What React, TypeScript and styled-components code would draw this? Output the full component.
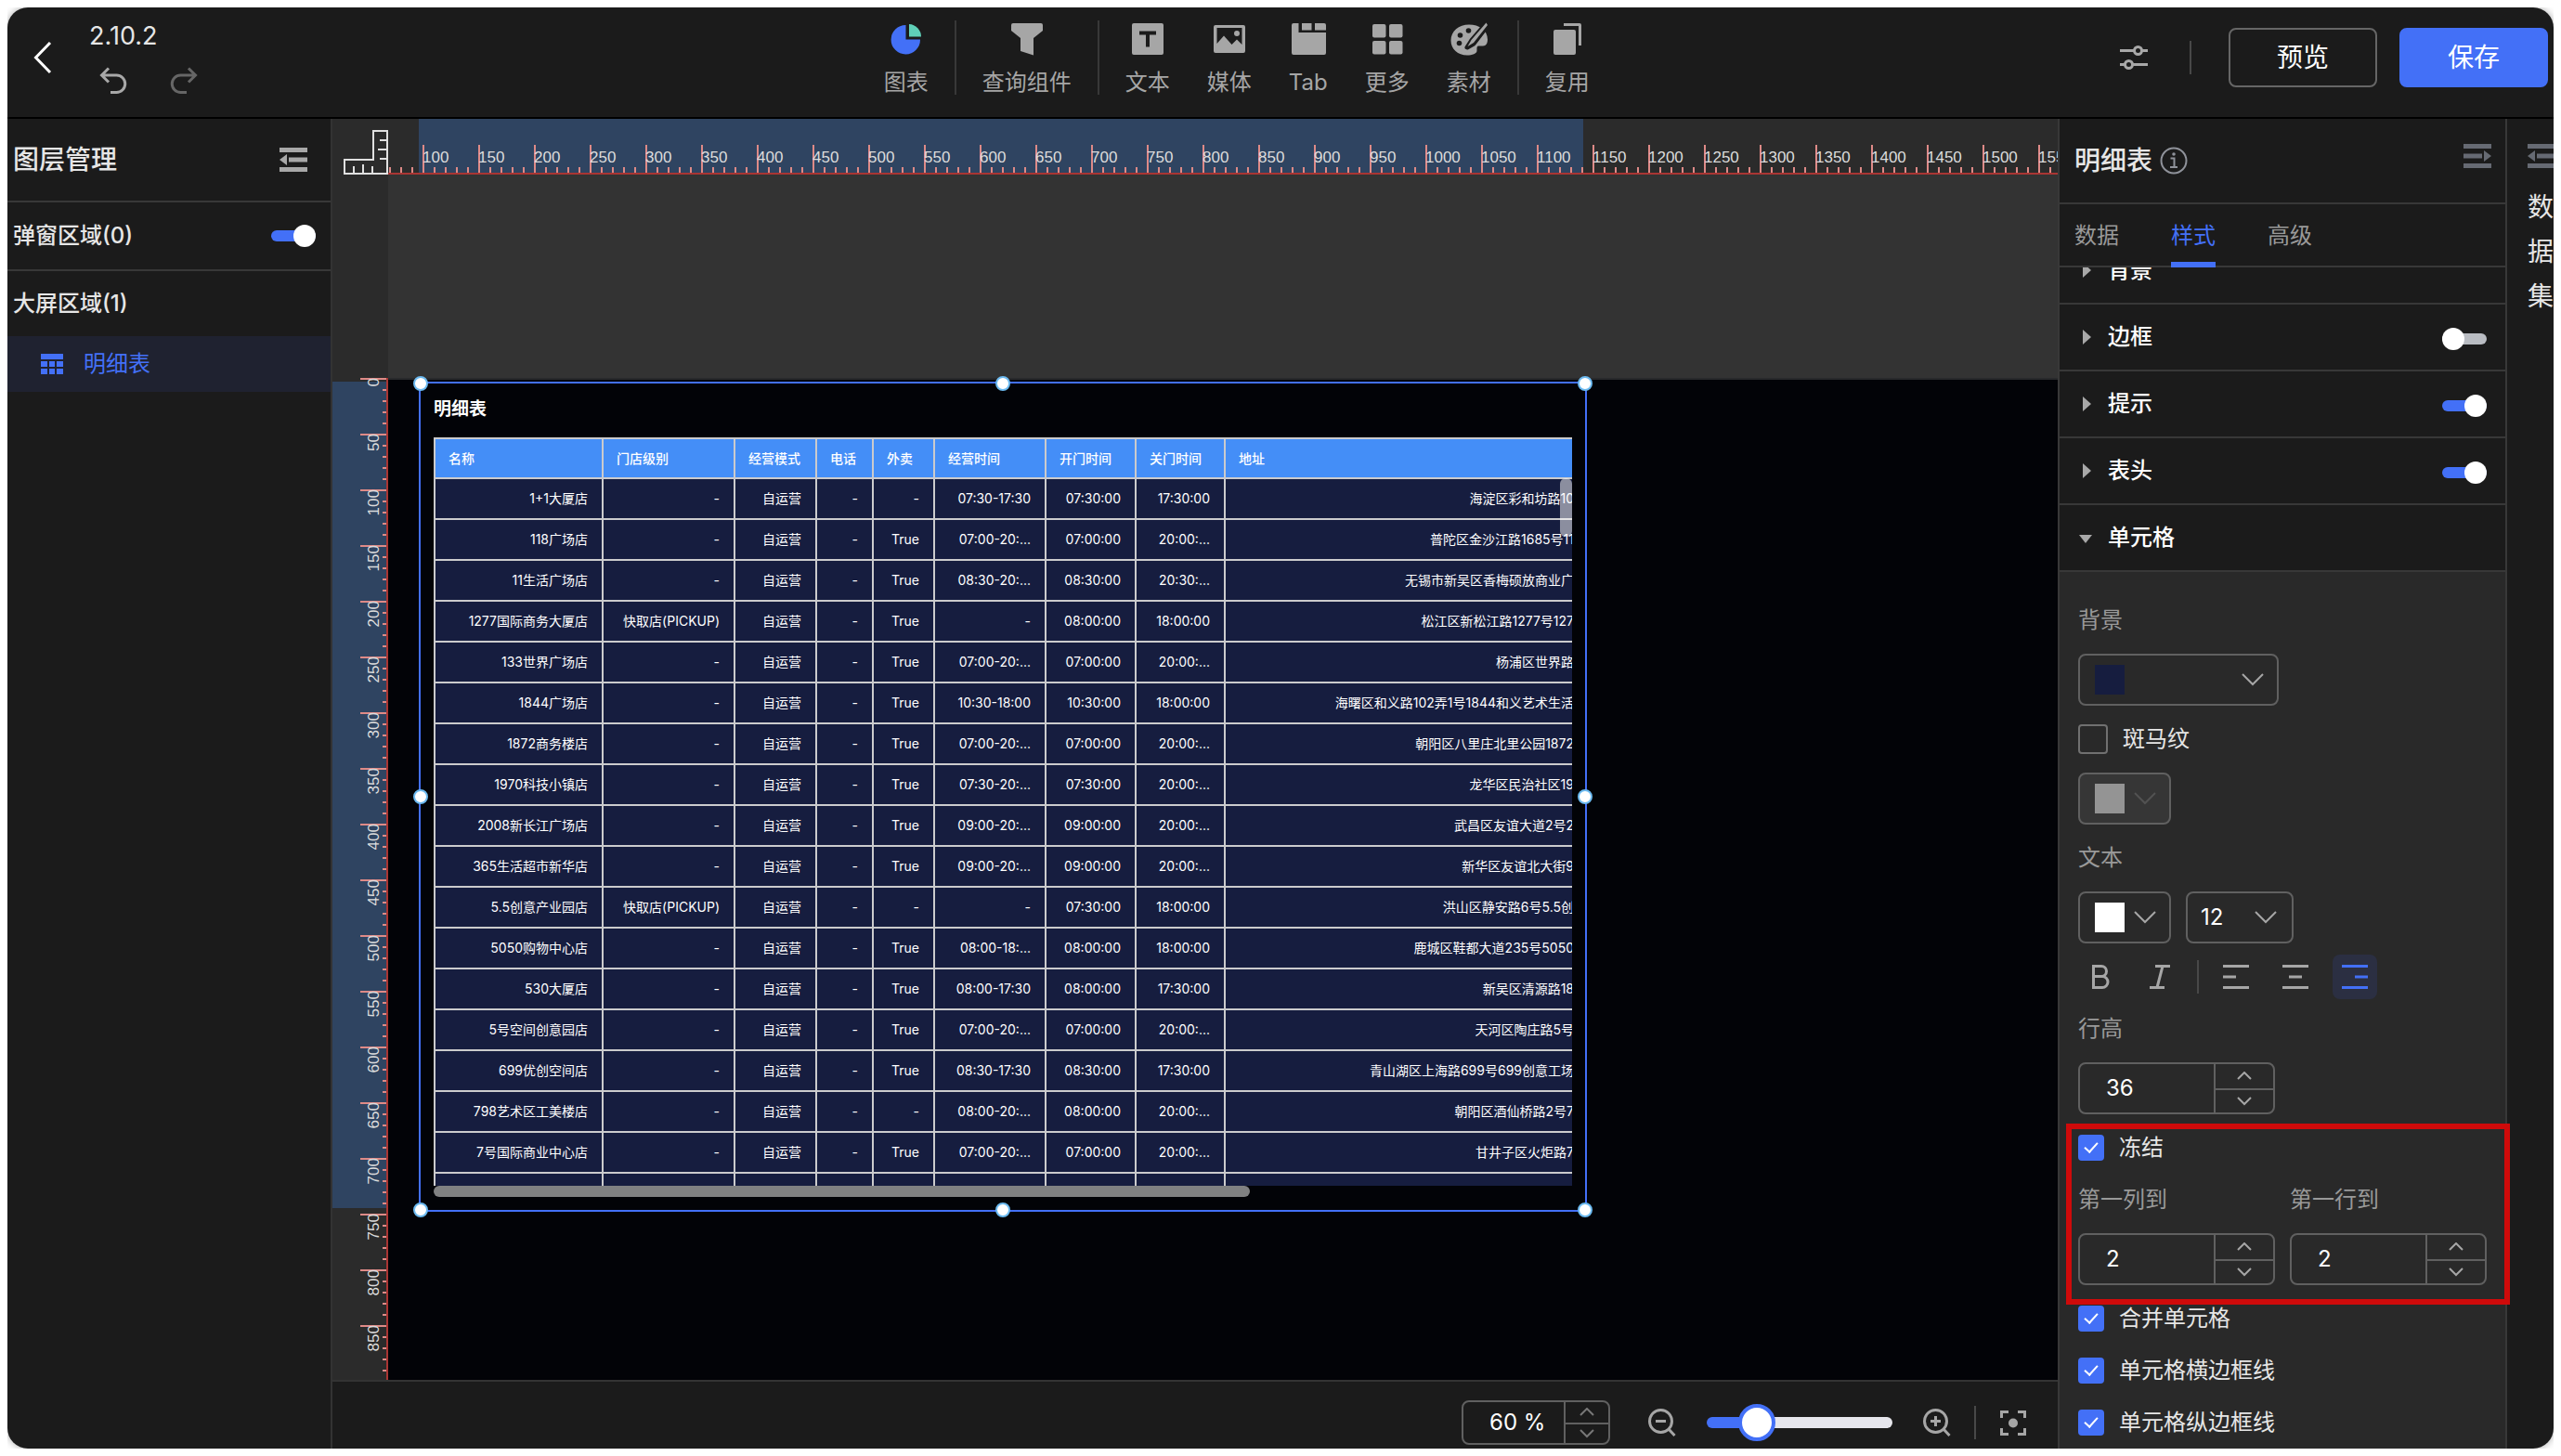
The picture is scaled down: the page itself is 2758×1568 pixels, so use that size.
import React, { useState } from "react";
import styled, { createGlobalStyle, css } from "styled-components";

const c = {
  bg: "#1b1b1b",
  panel: "#292929",
  line: "#383838",
  border: "#606060",
  primary: "#4370f7",
  text: "#e6e6e6",
  muted: "#a6a6a6",
  dim: "#999999",
  rulerBg: "#2b2b2b",
  rulerActive: "#2f4461",
  tick: "#de8a87",
  rulerLine: "#a93533",
  cell: "#161d3f",
  head: "#448ef7",
  grid: "#cbcbcd",
};

const sans = `Inter, "Noto Sans CJK SC", sans-serif`;

const GlobalStyle = createGlobalStyle`
  *, *::before, *::after { box-sizing: border-box; }
  body { margin: 8px; background: #fff; font-family: ${sans}; line-height: 32px; color: ${c.text}; }
  button, input, select { font: inherit; color: inherit; margin: 0; }
  button { padding: 0; border: 0; background: none; cursor: pointer; }
  svg { display: block; flex: none; }
`;

const Window = styled.div`
  display: flex;
  flex-direction: column;
  height: calc(100vh - 16px);
  border-radius: 22px;
  overflow: hidden;
  background: ${c.bg};
  box-shadow: 0 0 8px rgba(0, 0, 0, 0.35);
  font-size: 24px;
`;

/* ---------- header ---------- */

const Header = styled.header`
  display: grid;
  grid-template-columns: 1fr auto 1.1fr;
  height: 120px;
  flex: none;
  border-bottom: 2px solid #000;
`;

const HeaderLeft = styled.div`
  display: flex;
  align-items: flex-start;
`;

const BackButton = styled.button`
  padding: 36px 40px 0 28px;
`;

const ProjectInfo = styled.div`
  display: flex;
  flex-direction: column;
  gap: 16px;
  padding-top: 14px;
`;

const ProjectName = styled.span`
  font-size: 27px;
  line-height: 34px;
`;

const HistoryButtons = styled.div`
  display: flex;
  gap: 44px;
  padding-left: 10px;
`;

const Tools = styled.nav`
  display: flex;
  align-items: flex-start;
  gap: 40px;
  padding-top: 16px;
`;

const ToolGroup = styled.div`
  display: flex;
  gap: 40px;
  & + & {
    position: relative;
    margin-left: 18px;
  }
  & + &::before {
    content: "";
    position: absolute;
    left: -30px;
    top: -2px;
    width: 2px;
    height: 80px;
    background: ${c.line};
  }
`;

const ToolButton = styled.button`
  display: flex;
  flex-direction: column;
  align-items: center;
  gap: 13px;
  line-height: 32px;
  color: ${c.muted};
`;

const HeaderRight = styled.div`
  display: flex;
  justify-content: flex-end;
  align-items: flex-start;
  padding: 22px 6px 0 0;
`;

const SettingsButton = styled.button`
  height: 64px;
`;

const VDivider = styled.span<{ $m: number }>`
  width: 2px;
  height: 36px;
  align-self: center;
  margin: 0 ${(p) => p.$m}px;
  background: #484848;
`;

const HeaderDivider = styled(VDivider)`
  align-self: flex-start;
  margin: 14px 40px 0 44px;
`;

const ActionButton = styled.button<{ $primary?: boolean }>`
  width: 160px;
  height: 64px;
  border-radius: 8px;
  border: 2px solid ${(p) => (p.$primary ? c.primary : "#666")};
  background: ${(p) => (p.$primary ? c.primary : "transparent")};
  color: #fff;
  font-size: 28px;
  & + & {
    margin-left: 24px;
  }
`;

/* ---------- frame ---------- */

const Main = styled.div`
  display: grid;
  grid-template-columns: 350px minmax(0, 1fr) 484px 50px;
  flex: 1;
  min-height: 0;
`;

const LayersPanel = styled.aside`
  border-right: 2px solid #333;
`;

const PanelHeader = styled.div`
  display: flex;
  align-items: center;
  justify-content: space-between;
  height: 90px;
  padding: 0 25px 0 6px;
  border-bottom: 2px solid ${c.line};
`;

const PanelTitle = styled.h2`
  margin: 0;
  font-size: 28px;
  font-weight: 500;
`;

const AreaRow = styled.label<{ $line?: boolean }>`
  display: flex;
  align-items: center;
  justify-content: space-between;
  height: ${(p) => (p.$line ? 74 : 70)}px;
  padding: 0 16px 0 6px;
  border-bottom: ${(p) => (p.$line ? `2px solid ${c.line}` : "0")};
  font-weight: 500;
`;

const LayerItem = styled.button`
  display: flex;
  align-items: center;
  gap: 22px;
  width: 100%;
  height: 60px;
  padding-left: 36px;
  background: #1f2230;
  color: ${c.primary};
`;

const Switch = styled.input.attrs({ type: "checkbox", role: "switch" })`
  appearance: none;
  position: relative;
  width: 48px;
  height: 12px;
  border-radius: 6px;
  background: #b9bcc2;
  &::after {
    content: "";
    position: absolute;
    top: -6px;
    left: 0;
    width: 24px;
    height: 24px;
    border-radius: 50%;
    background: #fff;
  }
  &:checked {
    background: ${c.primary};
  }
  &:checked::after {
    left: 24px;
  }
`;

/* ---------- canvas ---------- */

const Editor = styled.main`
  display: grid;
  grid-template-columns: 60px minmax(0, 1fr);
  grid-template-rows: 60px minmax(0, 1fr) 74px;
  min-height: 0;
`;

const RulerCorner = styled.div`
  display: flex;
  align-items: flex-end;
  justify-content: flex-end;
  background: ${c.rulerBg};
`;

const rulerText = css`
  font-family: "Liberation Sans", sans-serif;
  font-size: 17px;
  line-height: 20px;
  color: #dcdcdc;
`;

const TopRuler = styled.div`
  position: relative;
  overflow: hidden;
  background: ${c.rulerBg};
  border-bottom: 2px solid ${c.rulerLine};
`;

const TopRange = styled.span`
  position: absolute;
  left: 33px;
  top: 0;
  width: 1254px;
  height: 100%;
  background: ${c.rulerActive};
`;

const TopTrack = styled.div`
  position: relative;
  display: flex;
  align-items: flex-end;
  width: max-content;
  height: 58px;
  margin-left: -23px;
  background: repeating-linear-gradient(to right, ${c.tick} 0 2px, transparent 2px 12px) bottom / 100% 6px no-repeat;
`;

const TopMark = styled.span`
  width: 60px;
  height: 30px;
  padding-top: 4px;
  background: linear-gradient(${c.tick}, ${c.tick}) left / 2px 100% no-repeat;
  ${rulerText}
`;

const LeftRuler = styled.div`
  position: relative;
  overflow: hidden;
  padding-top: 219px;
  background: ${c.rulerBg};
`;

const LeftRange = styled.span`
  position: absolute;
  left: 0;
  top: 223px;
  width: 100%;
  height: 890px;
  background: ${c.rulerActive};
`;

const LeftTrack = styled.div`
  position: relative;
  display: flex;
  flex-direction: column;
  align-items: flex-end;
  border-right: 2px solid ${c.rulerLine};
  background: repeating-linear-gradient(to bottom, ${c.tick} 0 2px, transparent 2px 12px) right / 4px 100% no-repeat;
`;

const LeftMark = styled.span`
  display: flex;
  justify-content: flex-end;
  align-items: flex-start;
  width: 28px;
  height: 60px;
  padding-right: 3px;
  background: linear-gradient(${c.tick}, ${c.tick}) top / 100% 2px no-repeat;
  ${rulerText}
`;

const Upright = styled.span`
  writing-mode: vertical-rl;
  transform: rotate(180deg);
`;

const Viewport = styled.div`
  display: flex;
  flex-direction: column;
  overflow: hidden;
  padding-top: 219px;
  background: #333;
`;

const Stage = styled.div`
  position: relative;
  flex: 1;
  border-top: 2px solid #28292b;
  background: #020307;
`;

const Widget = styled.section`
  position: absolute;
  left: 33px;
  top: 2px;
  width: 1258px;
  height: 894px;
  padding: 0 14px;
  border: 2px solid ${c.primary};
`;

const Handle = styled.span<{ $x: number; $y: number }>`
  position: absolute;
  left: ${(p) => p.$x}%;
  top: ${(p) => p.$y}%;
  width: 16px;
  height: 16px;
  margin: -8px 0 0 -8px;
  border: 2px solid #6cbaf0;
  border-radius: 50%;
  background: #fff;
`;

const WidgetTitle = styled.h3`
  margin: 0;
  height: 58px;
  font-size: 19px;
  line-height: 56px;
  font-weight: 700;
  color: #fff;
`;

const TableView = styled.div`
  position: relative;
  height: 806px;
  width: 1226px;
  overflow: hidden;
`;

const Table = styled.table`
  table-layout: fixed;
  width: 1226px;
  border-collapse: separate;
  border-spacing: 0;
  border-left: 2px solid ${c.grid};
  font-size: 14px;
  line-height: 20px;
  color: #fff;
`;

const Th = styled.th`
  height: 45px;
  padding: 0 14px;
  border: solid ${c.grid};
  border-width: 2px 2px 2px 0;
  background: ${c.head};
  text-align: left;
  font-weight: 500;
  white-space: nowrap;
  &:last-child {
    border-right: 0;
  }
`;

const Td = styled.td`
  height: 44px;
  padding: 0 15px 0 13px;
  border: solid ${c.grid};
  border-width: 0 2px 2px 0;
  background: ${c.cell};
  text-align: right;
  white-space: nowrap;
  &:last-child {
    padding-right: 0;
    border-right: 0;
  }
`;

const Overflowing = styled.span`
  margin-right: -2px;
`;

const VThumb = styled.span`
  position: absolute;
  right: 0;
  top: 44px;
  width: 13px;
  height: 63px;
  border-radius: 6px;
  background: rgba(255, 255, 255, 0.5);
`;

const HThumb = styled.div`
  width: 879px;
  height: 12px;
  border-radius: 6px;
  background: #808182;
`;

const StatusBar = styled.footer`
  grid-column: 1 / -1;
  display: flex;
  align-items: center;
  justify-content: flex-end;
  padding: 16px 32px 0 0;
  border-top: 2px solid #333;
  background: ${c.bg};
`;

const ZoomButton = styled.button`
  width: 32px;
  height: 32px;
`;

const ZoomSlider = styled.input.attrs({ type: "range" })`
  appearance: none;
  width: 200px;
  height: 12px;
  margin: 0 32px;
  border-radius: 6px;
  background: linear-gradient(to right, ${c.primary} var(--fill), #e6e6ec var(--fill));
  &::-webkit-slider-thumb {
    appearance: none;
    width: 40px;
    height: 40px;
    border: 4px solid ${c.primary};
    border-radius: 50%;
    background: #fff;
  }
`;

/* ---------- fields ---------- */

const StepperBox = styled.span<{ $small?: boolean }>`
  display: grid;
  grid-template-columns: minmax(0, 1fr) ${(p) => (p.$small ? 48 : 64)}px;
  width: ${(p) => (p.$small ? 160 : 212)}px;
  height: ${(p) => (p.$small ? 48 : 56)}px;
  margin-right: ${(p) => (p.$small ? 40 : 0)}px;
  border: 2px solid ${c.border};
  border-radius: 8px;
  overflow: hidden;
  color: ${(p) => (p.$small ? "#777" : c.muted)};
`;

const StepperInput = styled.input`
  width: 100%;
  padding: 0 0 0 28px;
  border: 0;
  outline: 0;
  background: none;
  color: #fff;
`;

const StepperButtons = styled.span`
  display: grid;
  grid-template-rows: 1fr 1fr;
  border-left: 2px solid ${c.border};
`;

const StepButton = styled.button`
  display: flex;
  align-items: center;
  justify-content: center;
  & + & {
    border-top: 2px solid ${c.border};
  }
`;

const ColorButton = styled.button<{ $wide?: boolean }>`
  display: flex;
  align-items: center;
  justify-content: space-between;
  width: ${(p) => (p.$wide ? 216 : 100)}px;
  height: 56px;
  padding: 0 14px 0 16px;
  border: 2px solid ${c.border};
  border-radius: 8px;
  color: ${c.muted};
  &:disabled {
    background: #363636;
    color: #525252;
  }
`;

const Swatch = styled.span<{ $color: string }>`
  width: 32px;
  height: 32px;
  background: ${(p) => p.$color};
`;

const SelectBox = styled.span`
  display: grid;
  align-items: center;
  width: 116px;
  height: 56px;
  border: 2px solid ${c.border};
  border-radius: 8px;
  color: ${c.muted};
  & > * {
    grid-area: 1 / 1;
  }
  & > svg {
    justify-self: end;
    margin-right: 16px;
    pointer-events: none;
  }
`;

const Select = styled.select`
  appearance: none;
  width: 100%;
  height: 100%;
  padding: 0 0 0 14px;
  border: 0;
  outline: 0;
  background: none;
  color: #fff;
`;

const CheckLabel = styled.label<{ $after?: number }>`
  display: flex;
  align-items: center;
  gap: 16px;
  height: 32px;
  margin-bottom: ${(p) => p.$after ?? 24}px;
`;

const Check = styled.input.attrs({ type: "checkbox" })`
  appearance: none;
  position: relative;
  width: 32px;
  height: 32px;
  border: 2px solid #707070;
  border-radius: 4px;
  &:checked {
    width: 28px;
    height: 28px;
    border-color: ${c.primary};
    background: ${c.primary};
  }
  &:checked::after {
    content: "";
    position: absolute;
    left: 8px;
    top: 3px;
    width: 8px;
    height: 14px;
    border: solid #fff;
    border-width: 0 2px 2px 0;
    transform: rotate(42deg);
  }
`;

/* ---------- property panel ---------- */

const PropsPanel = styled.aside`
  position: relative;
  z-index: 1;
  display: flex;
  flex-direction: column;
  min-height: 0;
  border: solid ${c.line};
  border-width: 0 2px;
`;

const PropsHeader = styled(PanelHeader)`
  flex: none;
  height: 92px;
  padding: 0 15px 0 16px;
`;

const TitleGroup = styled.div`
  display: flex;
  align-items: center;
  gap: 8px;
`;

const CollapseButton = styled.button`
  align-self: flex-start;
  padding-top: 27px;
`;

const Tabs = styled.div`
  display: flex;
  flex: none;
  gap: 56px;
  height: 68px;
  padding: 0 16px;
  border-bottom: 2px solid ${c.line};
`;

const Tab = styled.button<{ $active?: boolean }>`
  height: 68px;
  border-bottom: 6px solid ${(p) => (p.$active ? c.primary : "transparent")};
  border-top: 6px solid transparent;
  color: ${(p) => (p.$active ? c.primary : c.dim)};
`;

const Scroll = styled.div`
  flex: 1;
  min-height: 0;
  overflow-x: visible;
  overflow-y: clip;
`;

const ScrollBody = styled.div`
  display: flex;
  flex-direction: column;
  min-height: 100%;
  margin-top: -32px;
`;

const Section = styled.div`
  display: flex;
  flex: none;
  align-items: center;
  justify-content: space-between;
  height: 72px;
  padding: 0 20px;
  border-bottom: 2px solid ${c.line};
  & > input {
    margin-top: 4px;
  }
`;

const SectionTitle = styled.button`
  display: flex;
  align-items: center;
  gap: 16px;
  font-weight: 500;
  color: #fff;
`;

const SectionBody = styled.div`
  flex: 1 0 auto;
  padding: 36px 20px 12px;
  background: ${c.panel};
`;

const FieldLabel = styled.label`
  display: block;
  margin-bottom: 20px;
  line-height: 32px;
  color: ${c.dim};
`;

const Controls = styled.div<{ $after: number }>`
  display: flex;
  gap: 16px;
  margin-bottom: ${(p) => p.$after}px;
`;

const FormatBar = styled.div`
  display: flex;
  align-items: center;
  gap: 16px;
  margin-bottom: 16px;
`;

const FormatButton = styled.button<{ $active?: boolean }>`
  display: flex;
  align-items: center;
  justify-content: center;
  width: 48px;
  height: 48px;
  border-radius: 8px;
  color: ${(p) => (p.$active ? c.primary : c.muted)};
  background: ${(p) => (p.$active ? "#2b2f42" : "transparent")};
`;

const FreezeGroup = styled.div`
  position: relative;
  margin-bottom: 20px;
  &::after {
    content: "";
    position: absolute;
    inset: -10px -25px -21px -13px;
    border: 6px solid #cf0a0a;
    pointer-events: none;
  }
`;

const DatasetStrip = styled.aside`
  display: flex;
  flex-direction: column;
  align-items: flex-end;
  gap: 18px;
  padding-top: 27px;
  overflow: hidden;
`;

const StripLabel = styled.span`
  width: 28px;
  font-size: 28px;
  line-height: 48px;
`;

const StripIcon = styled.span`
  width: 28px;
  overflow: hidden;
`;

/* ---------- icons ---------- */

const FoldIcon = ({ right, color = "#a8a8a8" }: { right?: boolean; color?: string }) => (
  <svg width="30" height="26" viewBox="0 0 30 26" fill={color} aria-hidden>
    <g transform={right ? "translate(30 0) scale(-1 1)" : undefined}>
      <path d="M0 0h30v5H0zM10 10.500h20v5H10zM0 21h30v5H0zM0 13l8-6v12z" />
    </g>
  </svg>
);

const UndoIcon = ({ flip, color }: { flip?: boolean; color: string }) => (
  <svg width="32" height="30" viewBox="0 0 32 30" fill="none" stroke={color} strokeWidth="3" aria-hidden>
    <g transform={flip ? "translate(32 0) scale(-1 1)" : undefined}>
      <path d="M11 1.500L3.500 9L11 16.500M3.500 9H19.500A9.200 9.200 0 0 1 19.500 27.500H13" />
    </g>
  </svg>
);

const Chevron = ({ up, w = 24 }: { up?: boolean; w?: number }) => (
  <svg width={w} height={w / 2 + 2} viewBox={`0 0 ${w} ${w / 2 + 2}`} fill="none" stroke="currentColor" strokeWidth="2" aria-hidden>
    <path d={up ? `M1 ${w / 2}L${w / 2} 1L${w - 1} ${w / 2}` : `M1 1L${w / 2} ${w / 2}L${w - 1} 1`} />
  </svg>
);

const Caret = ({ open }: { open?: boolean }) => (
  <svg width="16" height="16" viewBox="0 0 16 16" fill="#a8a8a8" aria-hidden>
    <path d={open ? "M1 5h14L8 14z" : "M5 0l9 8-9 8z"} />
  </svg>
);

const Ic = ({ children }: { children: React.ReactNode }) => (
  <svg width="36" height="36" viewBox="0 0 36 36" fill="#a6a6a6" overflow="visible" aria-hidden>
    {children}
  </svg>
);

const icons: Record<string, React.ReactNode> = {
  chart: (
    <Ic>
      <path fill={c.primary} d="M17.500 3V18.500H33A15.700 15.700 0 1 1 17.500 3z" />
      <path fill="#5fd0b8" d="M21 2A13.500 13.500 0 0 1 34 15.500H21z" />
    </Ic>
  ),
  query: (
    <Ic>
      <path d="M3 1h30a2 2 0 0 1 2 2v6L25 17v18.500L11 31V17L1 9V3a2 2 0 0 1 2-2z" />
    </Ic>
  ),
  text: (
    <Ic>
      <rect x="1" y="1" width="34" height="34" rx="2" />
      <path d="M9 11.500h18M18 11.500V26.500" stroke={c.bg} strokeWidth="4" />
    </Ic>
  ),
  media: (
    <Ic>
      <path fillRule="evenodd" d="M3 3h30a2 2 0 0 1 2 2v26a2 2 0 0 1-2 2H3a2 2 0 0 1-2-2V5a2 2 0 0 1 2-2zM4.500 6v17L12 14.500L20.500 24L26 18.500L31.500 24V6z" />
      <circle cx="26" cy="12" r="3" />
    </Ic>
  ),
  tab: (
    <Ic>
      <path d="M0 3a2 2 0 0 1 2-2H7.500V11H37V33a2 2 0 0 1-2 2H2a2 2 0 0 1-2-2zM11 1H21.500V8.500H11zM25 1H35a2 2 0 0 1 2 2V8.500H25z" />
    </Ic>
  ),
  more: (
    <Ic>
      <rect x="2" y="2" width="14.500" height="14.500" rx="2" />
      <rect x="20" y="2" width="14.500" height="14.500" rx="2" />
      <rect x="2" y="20" width="14.500" height="14.500" rx="2" />
      <rect x="20" y="20" width="14.500" height="14.500" rx="2" />
    </Ic>
  ),
  palette: (
    <Ic>
      <path d="M18 2.500C7 2.500-1.500 9.500-1.500 19.500C-1.500 29 6 35.500 16 35.500C21.500 35.500 26.500 34 26.500 30.500C26.500 27.500 26 25.500 29 25.500H33C36.500 25.500 38 22.500 38 18.500C38 8.500 29 2.500 18 2.500z" />
      <g fill={c.bg}>
        <circle cx="8.500" cy="14" r="2.800" />
        <circle cx="17.500" cy="9" r="2.800" />
        <circle cx="7.500" cy="22.500" r="2.800" />
      </g>
      <path d="M36.500 1.500L20.500 20L16 27L23 23L37.500 4z" stroke={c.bg} strokeWidth="5" strokeLinejoin="round" />
      <path d="M36.500 0.500L20.500 19L16.500 26L23 22L38 3z" strokeLinejoin="round" />
    </Ic>
  ),
  reuse: (
    <Ic>
      <rect x="3" y="8" width="24" height="27" rx="2" />
      <path d="M14 1H31a2 2 0 0 1 2 2V25H30V4H14z" />
    </Ic>
  ),
};

const TableIcon = () => (
  <svg width="24" height="22" viewBox="0 0 24 22" fill={c.primary} aria-hidden>
    <path d="M0 0h24v6H0zM0 8h7v6H0zM9 8h6v6H9zM17 8h7v6h-7zM0 16h7v6H0zM9 16h6v6H9zM17 16h7v6h-7z" />
  </svg>
);

const Magnifier = ({ plus }: { plus?: boolean }) => (
  <svg width="32" height="32" viewBox="0 0 32 32" fill="none" stroke="#a6a6a6" strokeWidth="3" aria-hidden>
    <circle cx="14.500" cy="14.500" r="12" />
    <path d={`M23 23L29.500 30M9 14.500h11${plus ? "M14.500 9v11" : ""}`} />
  </svg>
);

/* ---------- data ---------- */

const toolGroups = [
  [["chart", "图表"]],
  [["query", "查询组件"]],
  [["text", "文本"], ["media", "媒体"], ["tab", "Tab"], ["more", "更多"], ["palette", "素材"]],
  [["reuse", "复用"]],
];

const columns: [string, number][] = [
  ["名称", 181],
  ["门店级别", 142],
  ["经营模式", 88],
  ["电话", 61],
  ["外卖", 66],
  ["经营时间", 120],
  ["开门时间", 97],
  ["关门时间", 96],
  ["地址", 373],
];

const rows = [
  ["1+1大厦店", "-", "-", "07:30-17:30", "07:30:00", "17:30:00", "海淀区彩和坊路10"],
  ["118广场店", "-", "True", "07:00-20:...", "07:00:00", "20:00:...", "普陀区金沙江路1685号11"],
  ["11生活广场店", "-", "True", "08:30-20:...", "08:30:00", "20:30:...", "无锡市新吴区香梅硕放商业广"],
  ["1277国际商务大厦店", "快取店(PICKUP)", "True", "-", "08:00:00", "18:00:00", "松江区新松江路1277号127"],
  ["133世界广场店", "-", "True", "07:00-20:...", "07:00:00", "20:00:...", "杨浦区世界路"],
  ["1844广场店", "-", "True", "10:30-18:00", "10:30:00", "18:00:00", "海曙区和义路102弄1号1844和义艺术生活"],
  ["1872商务楼店", "-", "True", "07:00-20:...", "07:00:00", "20:00:...", "朝阳区八里庄北里公园1872"],
  ["1970科技小镇店", "-", "True", "07:30-20:...", "07:30:00", "20:00:...", "龙华区民治社区19"],
  ["2008新长江广场店", "-", "True", "09:00-20:...", "09:00:00", "20:00:...", "武昌区友谊大道2号2"],
  ["365生活超市新华店", "-", "True", "09:00-20:...", "09:00:00", "20:00:...", "新华区友谊北大街9"],
  ["5.5创意产业园店", "快取店(PICKUP)", "-", "-", "07:30:00", "18:00:00", "洪山区静安路6号5.5创"],
  ["5050购物中心店", "-", "True", "08:00-18:...", "08:00:00", "18:00:00", "鹿城区鞋都大道235号5050"],
  ["530大厦店", "-", "True", "08:00-17:30", "08:00:00", "17:30:00", "新吴区清源路18"],
  ["5号空间创意园店", "-", "True", "07:00-20:...", "07:00:00", "20:00:...", "天河区陶庄路5号"],
  ["699优创空间店", "-", "True", "08:30-17:30", "08:30:00", "17:30:00", "青山湖区上海路699号699创意工场"],
  ["798艺术区工美楼店", "-", "-", "08:00-20:...", "08:00:00", "20:00:...", "朝阳区酒仙桥路2号7"],
  ["7号国际商业中心店", "-", "True", "07:00-20:...", "07:00:00", "20:00:...", "甘井子区火炬路7"],
];

const topMarks = Array.from({ length: 31 }, (_, i) => 50 + i * 50);
const leftMarks = Array.from({ length: 18 }, (_, i) => i * 50);
const handles = [[0, 0], [50, 0], [100, 0], [0, 50], [100, 50], [0, 100], [50, 100], [100, 100]];

/* ---------- parts ---------- */

function Stepper({ id, label, initial, small }: { id?: string; label: string; initial: string; small?: boolean }) {
  const [value, setValue] = useState(initial);
  const step = (d: number) => setValue((v) => v.replace(/\d+/, (n) => String(Math.max(0, Number(n) + d))));
  return (
    <StepperBox $small={small}>
      <StepperInput id={id} aria-label={label} value={value} onChange={(e) => setValue(e.target.value)} />
      <StepperButtons>
        <StepButton aria-label={`${label} +`} onClick={() => step(1)}>
          <Chevron up w={16} />
        </StepButton>
        <StepButton aria-label={`${label} -`} onClick={() => step(-1)}>
          <Chevron w={16} />
        </StepButton>
      </StepperButtons>
    </StepperBox>
  );
}

function DetailTable() {
  return (
    <Table>
      <colgroup>
        {columns.map(([name, width]) => (
          <col key={name} style={{ width }} />
        ))}
      </colgroup>
      <thead>
        <tr>
          {columns.map(([name]) => (
            <Th key={name}>{name}</Th>
          ))}
        </tr>
      </thead>
      <tbody>
        {rows.map(([name, level, takeout, hours, open, close, address]) => (
          <tr key={name}>
            <Td>{name}</Td>
            <Td>{level}</Td>
            <Td>自运营</Td>
            <Td>-</Td>
            <Td>{takeout}</Td>
            <Td>{hours}</Td>
            <Td>{open}</Td>
            <Td>{close}</Td>
            <Td>
              <Overflowing>{address}</Overflowing>
            </Td>
          </tr>
        ))}
        <tr>
          {columns.map(([name]) => (
            <Td key={name} />
          ))}
        </tr>
      </tbody>
    </Table>
  );
}

function AlignIcon({ x }: { x: number }) {
  return (
    <svg width="28" height="26" viewBox="0 0 28 26" fill="currentColor" aria-hidden>
      <path d={`M0 0h28v3H0zM${x} 11.500h14v3h-14zM0 23h28v3H0z`} />
    </svg>
  );
}

export default function App() {
  const [zoom, setZoom] = useState(21);
  return (
    <>
      <GlobalStyle />
      <Window>
        <Header>
          <HeaderLeft>
            <BackButton aria-label="返回">
              <svg width="20" height="36" viewBox="0 0 20 36" fill="none" stroke="#fff" strokeWidth="3">
                <path d="M18 2L2.500 18L18 34" />
              </svg>
            </BackButton>
            <ProjectInfo>
              <ProjectName>2.10.2</ProjectName>
              <HistoryButtons>
                <button aria-label="撤销">
                  <UndoIcon color="#a8a8a8" />
                </button>
                <button aria-label="重做">
                  <UndoIcon flip color="#666" />
                </button>
              </HistoryButtons>
            </ProjectInfo>
          </HeaderLeft>
          <Tools>
            {toolGroups.map((group) => (
              <ToolGroup key={group[0][0]}>
                {group.map(([icon, label]) => (
                  <ToolButton key={icon}>
                    {icons[icon]}
                    {label}
                  </ToolButton>
                ))}
              </ToolGroup>
            ))}
          </Tools>
          <HeaderRight>
            <SettingsButton aria-label="设置">
              <svg width="32" height="32" viewBox="0 0 32 32" fill="none" stroke="#a8a8a8" strokeWidth="3">
                <path d="M1 8.500h15M25 8.500h6M1 23.500h5M15 23.500h16" />
                <circle cx="20.500" cy="8.500" r="4" />
                <circle cx="10.500" cy="23.500" r="4" />
              </svg>
            </SettingsButton>
            <HeaderDivider $m={0} />
            <ActionButton>预览</ActionButton>
            <ActionButton $primary>保存</ActionButton>
          </HeaderRight>
        </Header>

        <Main>
          <LayersPanel>
            <PanelHeader>
              <PanelTitle>图层管理</PanelTitle>
              <button aria-label="收起图层">
                <FoldIcon />
              </button>
            </PanelHeader>
            <AreaRow $line>
              弹窗区域(0)
              <Switch defaultChecked />
            </AreaRow>
            <AreaRow as="div">大屏区域(1)</AreaRow>
            <LayerItem>
              <TableIcon />
              明细表
            </LayerItem>
          </LayersPanel>

          <Editor>
            <RulerCorner>
              <svg width="48" height="48" viewBox="0 0 48 48" fill="none" stroke="#e0e0e0" strokeWidth="2" aria-hidden>
                <path d="M32 1H47V47H1V32H32zM39 11h8M37 21h10M39 31h8M11 47v-8M21 47v-10M31 47v-8" />
              </svg>
            </RulerCorner>
            <TopRuler>
              <TopRange />
              <TopTrack>
                {topMarks.map((n) => (
                  <TopMark key={n}>{n}</TopMark>
                ))}
              </TopTrack>
            </TopRuler>
            <LeftRuler>
              <LeftRange />
              <LeftTrack>
                {leftMarks.map((n) => (
                  <LeftMark key={n}>
                    <Upright>{n}</Upright>
                  </LeftMark>
                ))}
              </LeftTrack>
            </LeftRuler>
            <Viewport>
              <Stage>
                <Widget>
                  <WidgetTitle>明细表</WidgetTitle>
                  <TableView>
                    <DetailTable />
                    <VThumb />
                  </TableView>
                  <HThumb />
                  {handles.map(([x, y]) => (
                    <Handle key={`${x}-${y}`} $x={x} $y={y} />
                  ))}
                </Widget>
              </Stage>
            </Viewport>
            <StatusBar>
              <Stepper small label="缩放" initial="60 %" />
              <ZoomButton aria-label="缩小">
                <Magnifier />
              </ZoomButton>
              <ZoomSlider
                aria-label="缩放比例"
                value={zoom}
                onChange={(e) => setZoom(Number(e.target.value))}
                style={{ "--fill": `${10 + zoom * 0.8}%` } as React.CSSProperties}
              />
              <ZoomButton aria-label="放大">
                <Magnifier plus />
              </ZoomButton>
              <VDivider $m={24} />
              <ZoomButton aria-label="适应屏幕">
                <svg width="32" height="32" viewBox="0 0 32 32" fill="none" stroke="#a6a6a6" strokeWidth="3">
                  <path d="M3.500 11V4.500H11M21 4.500h7.500V11M28.500 22v6.500H21M11 28.500H3.500V22" />
                  <circle cx="16" cy="16.500" r="5" fill="#a6a6a6" stroke="none" />
                </svg>
              </ZoomButton>
            </StatusBar>
          </Editor>

          <PropsPanel>
            <PropsHeader>
              <TitleGroup>
                <PanelTitle>明细表</PanelTitle>
                <svg width="30" height="30" viewBox="0 0 30 30" fill="none" stroke="#8f929a" strokeWidth="2" aria-hidden>
                  <circle cx="15" cy="15" r="13.500" />
                  <path d="M11.500 12.500h4v9M11 22h8" />
                  <circle cx="15" cy="8" r="1.800" fill="#8f929a" stroke="none" />
                </svg>
              </TitleGroup>
              <CollapseButton aria-label="收起属性">
                <FoldIcon right color="#666a73" />
              </CollapseButton>
            </PropsHeader>
            <Tabs role="tablist">
              <Tab role="tab">数据</Tab>
              <Tab role="tab" aria-selected $active>
                样式
              </Tab>
              <Tab role="tab">高级</Tab>
            </Tabs>
            <Scroll>
              <ScrollBody>
                <Section>
                  <SectionTitle>
                    <Caret />
                    背景
                  </SectionTitle>
                </Section>
                <Section>
                  <SectionTitle>
                    <Caret />
                    边框
                  </SectionTitle>
                  <Switch aria-label="边框" />
                </Section>
                <Section>
                  <SectionTitle>
                    <Caret />
                    提示
                  </SectionTitle>
                  <Switch aria-label="提示" defaultChecked />
                </Section>
                <Section>
                  <SectionTitle>
                    <Caret />
                    表头
                  </SectionTitle>
                  <Switch aria-label="表头" defaultChecked />
                </Section>
                <Section>
                  <SectionTitle>
                    <Caret open />
                    单元格
                  </SectionTitle>
                </Section>
                <SectionBody>
                  <FieldLabel htmlFor="cell-bg">背景</FieldLabel>
                  <Controls $after={20}>
                    <ColorButton id="cell-bg" $wide>
                      <Swatch $color={c.cell} />
                      <Chevron />
                    </ColorButton>
                  </Controls>
                  <CheckLabel $after={20}>
                    <Check />
                    斑马纹
                  </CheckLabel>
                  <Controls $after={20}>
                    <ColorButton disabled aria-label="斑马纹颜色">
                      <Swatch $color="#949494" />
                      <Chevron />
                    </ColorButton>
                  </Controls>
                  <FieldLabel htmlFor="text-color">文本</FieldLabel>
                  <Controls $after={12}>
                    <ColorButton id="text-color">
                      <Swatch $color="#fff" />
                      <Chevron />
                    </ColorButton>
                    <SelectBox>
                      <Select aria-label="字号" defaultValue="12">
                        <option>12</option>
                        <option>14</option>
                        <option>16</option>
                      </Select>
                      <Chevron />
                    </SelectBox>
                  </Controls>
                  <FormatBar>
                    <FormatButton aria-label="加粗">
                      <svg width="20" height="26" viewBox="0 0 20 26" fill="none" stroke="currentColor" strokeWidth="3">
                        <path d="M2.500 1.500H11A5.500 5.500 0 0 1 11 12.500H2.500zM2.500 12.500H12A6 6 0 0 1 12 24.500H2.500z" />
                      </svg>
                    </FormatButton>
                    <FormatButton aria-label="斜体">
                      <svg width="22" height="26" viewBox="0 0 22 26" fill="none" stroke="currentColor" strokeWidth="3">
                        <path d="M6 1.500h16M0 24.500h16M14 1.500L8 24.500" />
                      </svg>
                    </FormatButton>
                    <VDivider $m={0} />
                    <FormatButton aria-label="左对齐">
                      <AlignIcon x={0} />
                    </FormatButton>
                    <FormatButton aria-label="居中">
                      <AlignIcon x={7} />
                    </FormatButton>
                    <FormatButton aria-label="右对齐" $active>
                      <AlignIcon x={14} />
                    </FormatButton>
                  </FormatBar>
                  <FieldLabel htmlFor="row-height">行高</FieldLabel>
                  <Controls $after={20}>
                    <Stepper id="row-height" label="行高" initial="36" />
                  </Controls>
                  <FreezeGroup>
                    <CheckLabel>
                      <Check defaultChecked />
                      冻结
                    </CheckLabel>
                    <Controls $after={0}>
                      <div>
                        <FieldLabel htmlFor="freeze-col">第一列到</FieldLabel>
                        <Stepper id="freeze-col" label="第一列到" initial="2" />
                      </div>
                      <div>
                        <FieldLabel htmlFor="freeze-row">第一行到</FieldLabel>
                        <Stepper id="freeze-row" label="第一行到" initial="2" />
                      </div>
                    </Controls>
                  </FreezeGroup>
                  <CheckLabel>
                    <Check defaultChecked />
                    合并单元格
                  </CheckLabel>
                  <CheckLabel>
                    <Check defaultChecked />
                    单元格横边框线
                  </CheckLabel>
                  <CheckLabel $after={0}>
                    <Check defaultChecked />
                    单元格纵边框线
                  </CheckLabel>
                </SectionBody>
              </ScrollBody>
            </Scroll>
          </PropsPanel>

          <DatasetStrip>
            <StripIcon>
              <FoldIcon color="#666a73" />
            </StripIcon>
            <StripLabel>数据集</StripLabel>
          </DatasetStrip>
        </Main>
      </Window>
    </>
  );
}
